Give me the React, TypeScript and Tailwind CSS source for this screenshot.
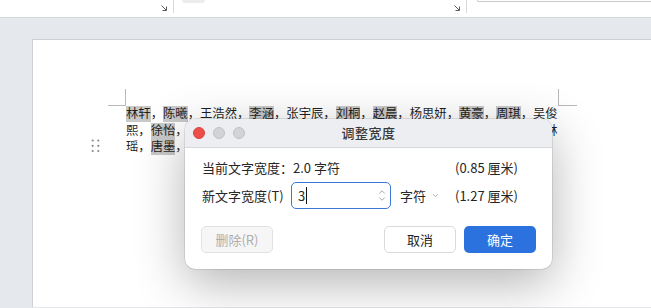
import React from "react";
import { ChevronDown, ChevronUp } from "lucide-react";

const font = "font-['Noto_Sans_CJK_SC','Noto_Sans',sans-serif]";

function Hl({ children }: { children: React.ReactNode }) {
  return <span className="bg-[#c9c9c9]">{children}</span>;
}

function Launcher() {
  return (
    <svg width="8" height="8" viewBox="0 0 8 8" className="shrink-0">
      <path d="M1.5 1.5 L6 6 M6.5 2.5 V6.5 H2.5" stroke="#5a5a5a" strokeWidth="1" fill="none" />
    </svg>
  );
}

function DragHandle() {
  const xs = [4.7, 10.3];
  const ys = [1.5, 6.8, 12];
  return (
    <svg width="16" height="16" viewBox="0 0 16 16" className="overflow-visible">
      {xs.map((x) => ys.map((y) => <circle key={`${x}-${y}`} cx={x} cy={y} r="1.1" fill="#8a8a8a" />))}
    </svg>
  );
}

function Line({ children, gutter }: { children: React.ReactNode; gutter?: React.ReactNode }) {
  return (
    <div className="flex h-[16.5px]">
      <div className="w-[38px] shrink-0">{gutter}</div>
      <div className="w-[432px] overflow-hidden whitespace-nowrap leading-[15px] text-[12.34px] text-[#1f1f1f]">
        {children}
      </div>
    </div>
  );
}

function Dialog() {
  return (
    <div className="absolute left-[185px] top-[119px] w-[367px] h-[150px] rounded-[10px] overflow-hidden bg-white shadow-[0_14px_50px_rgba(0,0,0,0.3),0_0_0_0.5px_rgba(0,0,0,0.18)]">
      <div className="h-[29px] bg-[#eceef2] border-b border-[#d6d8dc] grid grid-cols-[1fr_auto_1fr] items-center">
        <div className="flex items-center gap-[8px] pl-[8px]">
          <span className="w-[12px] h-[12px] rounded-full bg-[#ee4e4a] border border-[#d9443f]" />
          <span className="w-[12px] h-[12px] rounded-full bg-[#d2d3d6] border border-[#c0c1c4]" />
          <span className="w-[12px] h-[12px] rounded-full bg-[#d2d3d6] border border-[#c0c1c4]" />
        </div>
        <div className="text-[13px] font-medium text-[#3a3a3a] tracking-[0.5px]">调整宽度</div>
        <div />
      </div>
      <div className="px-[16px] pt-[10px] pb-[16px] text-[13px] text-[#262626]">
        <div className="h-[20px] flex items-center pl-[1px]">
          <div className="w-[253px]">当前文字宽度：2.0 字符</div>
          <div>(0.85 厘米)</div>
        </div>
        <div className="mt-[4px] h-[27px] flex items-center pl-[1px]">
          <div className="w-[89px]">新文字宽度(T)</div>
          <div className="w-[100px] h-[27px] rounded-[5px] border-[1.5px] border-[#3b78d8] flex items-center pl-[6px] pr-[3px]">
            <span className="text-[13px]">3</span>
            <span className="w-[1px] h-[17px] bg-[#111] ml-[1px]" />
            <div className="ml-auto flex flex-col items-center -space-y-[3px] text-[#7b7b7b]">
              <ChevronUp size={10} strokeWidth={1.6} />
              <ChevronDown size={10} strokeWidth={1.6} />
            </div>
          </div>
          <div className="w-[64px] flex items-center pl-[9px]">
            <span>字符</span>
            <ChevronDown size={9} strokeWidth={1.6} className="ml-[5px] text-[#7a7a7a]" />
          </div>
          <div>(1.27 厘米)</div>
        </div>
        <div className="mt-[17px] flex items-center">
          <button className="w-[72px] h-[27px] rounded-[5px] bg-[#f6f6f6] border border-[#e2e2e2] text-[#aeaeae]">
            删除(R)
          </button>
          <button className="ml-auto w-[72px] h-[27px] rounded-[5px] bg-white border border-[#dadada] text-[#1f1f1f]">
            取消
          </button>
          <button className="ml-[8px] w-[72px] h-[27px] rounded-[5px] bg-[#2b72de] text-white">
            确定
          </button>
        </div>
      </div>
    </div>
  );
}

export default function App() {
  return (
    <div className={`relative w-[651px] h-[308px] overflow-hidden bg-[#e5e8ec] ${font}`}>
      {/* toolbar strip */}
      <div className="h-[18px] bg-white border-b border-[#d3d6da] flex items-start">
        <div className="ml-[160px] mt-[4px]">
          <Launcher />
        </div>
        <div className="ml-[5px] w-px h-[13px] bg-[#d8d8d8]" />
        <div className="ml-[8px] w-[23px] h-[3px] rounded-b-[4px] bg-[#ececec]" />
        <div className="ml-[248px] mt-[4px]">
          <Launcher />
        </div>
        <div className="ml-[5px] w-px h-[13px] bg-[#d8d8d8]" />
        <div className="ml-[10px] flex-1 h-[2px] border-l border-b border-[#c9c9c9] rounded-bl-[3px]" />
      </div>

      {/* page */}
      <div className="pl-[32px] pt-[21px] h-[289px]">
        <div className="h-full bg-white border-l border-t border-[#cdd0d4] pl-[55px] pt-[49px]">
          <div className="flex ml-[20px]">
            <div className="w-[18px] h-[17px] border-r border-b border-[#b8b8b8]" />
            <div className="w-[432px]" />
            <div className="w-[19px] h-[17px] border-l border-b border-[#b8b8b8]" />
          </div>
          <Line>
            <Hl>林轩</Hl>，<Hl>陈曦</Hl>，王浩然，<Hl>李涵</Hl>，张宇辰，<Hl>刘桐</Hl>，<Hl>赵晨</Hl>，杨思妍，<Hl>黄豪</Hl>，<Hl>周琪</Hl>，吴俊
          </Line>
          <Line>
            熙，<Hl>徐怡</Hl>，孙浩宇，马晓雯，朱子涵，胡一鸣，郭佳，何杰，韩雪，高欣然，林
          </Line>
          <Line gutter={<DragHandle />}>
            瑶，<Hl>唐墨</Hl>，孙悦，
          </Line>
        </div>
      </div>

      <Dialog />
    </div>
  );
}
